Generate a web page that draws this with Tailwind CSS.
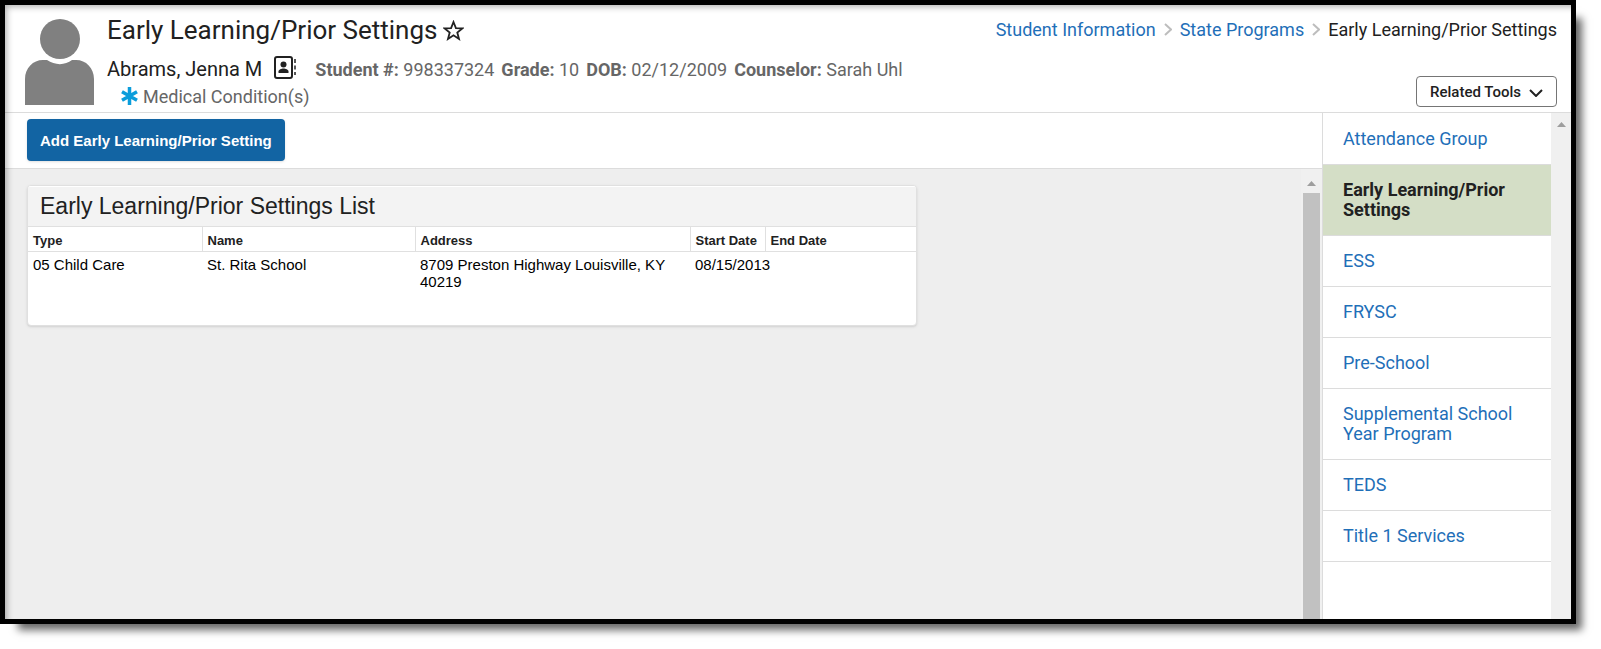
<!DOCTYPE html>
<html lang="en">

<head>
  <meta charset="UTF-8" />
  <meta name="viewport" content="width=device-width, initial-scale=1.0" />
  <title>Early Learning/Prior Settings</title>
  <script src="https://cdn.jsdelivr.net/npm/@tailwindcss/browser@4"></script>
</head>

<body class="h-screen bg-white pr-[25px] pb-[25px] font-[Roboto,sans-serif] text-[#212121]">
  <div class="relative flex flex-col h-full border-5 border-black bg-white shadow-[12px_12px_8px_-6px_rgba(0,0,0,0.6)]">
    <!-- header -->
    <header class="flex justify-between h-[108px] shrink-0 border-b border-[#dcdcdc] pl-5 pr-[14px]">
      <div class="flex">
        <svg class="w-[69px] h-[86px] mt-[14px] shrink-0" viewBox="0 0 69 86" fill="#808080" aria-hidden="true">
          <circle cx="35" cy="20" r="20" />
          <path d="M0 86V60C0 49 8 41 18 41H22C30 46.500 40 46.500 47 41H51C61 41 69 49 69 60V86Z" />
        </svg>
        <div class="pl-[13px] pt-2">
          <div class="flex items-center h-[34px]">
            <h1 class="text-[26px] leading-[34px]">Early Learning/Prior Settings</h1>
            <button type="button" class="ml-[6px]" aria-label="Add to favorites">
              <svg class="w-[21px] h-[21px]" viewBox="0 0 21 21" fill="none" stroke="#212121" stroke-width="1.800" stroke-linejoin="miter">
                <path d="M10.500 2L12.900 8.100L19.300 8.400L14.300 12.500L16 18.900L10.500 15.300L5 18.900L6.700 12.500L1.700 8.400L8.100 8.100Z" />
              </svg>
            </button>
          </div>
          <div class="flex items-center h-7 mt-2 whitespace-nowrap">
            <span class="text-[20px]">Abrams, Jenna M</span>
            <button type="button" class="ml-3" aria-label="Contact card">
              <svg class="w-[22px] h-[23px] mb-1" viewBox="0 0 22 23" fill="none">
                <rect x="1" y="1" width="17" height="21" rx="2" stroke="#212121" stroke-width="2" />
                <circle cx="9.500" cy="8.500" r="3" fill="#212121" />
                <path d="M4.500 17V15.500C4.500 13.500 7.500 12.500 9.500 12.500S14.500 13.500 14.500 15.500V17Z" fill="#212121" />
                <path d="M21 3V7M21 9.500V13.500M21 16V19" stroke="#212121" stroke-width="1.500" />
              </svg>
            </button>
            <div class="flex gap-[7px] ml-[19px] text-[18px] text-[#666666]">
              <span><b>Student #:</b> 998337324</span>
              <span><b>Grade:</b> 10</span>
              <span><b>DOB:</b> 02/12/2009</span>
              <span><b>Counselor:</b> Sarah Uhl</span>
            </div>
          </div>
          <div class="flex items-center h-[26px] pl-[14px] gap-[5px] text-[18px] text-[#666666]">
            <svg class="w-[17px] h-[18px]" viewBox="0 0 17 18" stroke="#0b9ddb" stroke-width="3.500" aria-hidden="true">
              <path d="M8.500 0V18M1 4.700L16 13.300M16 4.700L1 13.300" />
            </svg>
            <span>Medical Condition(s)</span>
          </div>
        </div>
      </div>

      <div class="flex flex-col items-end pt-3">
        <nav class="flex items-center gap-2 h-6 text-[18px] whitespace-nowrap" aria-label="Breadcrumb">
          <a href="#" class="text-[#1f6fb8]">Student Information</a>
          <svg class="w-[8px] h-[13px]" viewBox="0 0 8 13" fill="none" stroke="#bdbdbd" stroke-width="2"><path d="M1 1L7 6.500L1 12" /></svg>
          <a href="#" class="text-[#1f6fb8]">State Programs</a>
          <svg class="w-[8px] h-[13px]" viewBox="0 0 8 13" fill="none" stroke="#bdbdbd" stroke-width="2"><path d="M1 1L7 6.500L1 12" /></svg>
          <span>Early Learning/Prior Settings</span>
        </nav>
        <button type="button" class="flex items-center gap-2 h-[31px] mt-[35px] px-[13px] pt-[2px] border border-[#757575] rounded-[4px] text-[15px] font-medium">
          Related Tools
          <svg class="w-[14px] h-[8px]" viewBox="0 0 14 8" fill="none" stroke="#212121" stroke-width="2"><path d="M1 1L7 7L13 1" /></svg>
        </button>
      </div>
    </header>

    <div class="flex flex-1 min-h-0">
      <!-- main -->
      <main class="flex flex-col flex-1 min-w-0 font-['Liberation_Sans',Arial,sans-serif]">
        <div class="flex items-start h-[56px] shrink-0 pt-[6px] pl-[22px] border-b border-[#dcdcdc]">
          <button type="button" class="h-[42px] px-[13px] pt-[2px] rounded-[4px] bg-[#1264a3] text-white text-[15px] font-bold shadow-sm">Add Early Learning/Prior Setting</button>
        </div>
        <div class="flex flex-1 min-h-0 bg-[#eeeeee]">
          <div class="flex-1 pt-4 pl-[22px]">
            <section class="w-[890px] h-[141px] border border-[#e0e0e0] rounded-[4px] bg-white overflow-hidden shadow-sm">
              <h2 class="h-[41px] pl-3 border-t border-b border-t-white border-b-[#e0e0e0] bg-[#f3f3f3] text-[23px] leading-[38px]">Early Learning/Prior Settings List</h2>
              <table class="w-full table-fixed text-left">
                <thead>
                  <tr class="h-[24px] text-[13px] leading-[17px] border-b border-[#e0e0e0]">
                    <th class="w-[174px] pt-[3px] pl-[5px] border-r border-[#e0e0e0]">Type</th>
                    <th class="w-[213px] pt-[3px] pl-[5px] border-r border-[#e0e0e0]">Name</th>
                    <th class="w-[275px] pt-[3px] pl-[5px] border-r border-[#e0e0e0]">Address</th>
                    <th class="w-[75px] pt-[3px] pl-[5px] border-r border-[#e0e0e0] whitespace-nowrap">Start Date</th>
                    <th class="pt-[3px] pl-[5px]">End Date</th>
                  </tr>
                </thead>
                <tbody>
                  <tr class="text-[15px] leading-[17px] text-black align-top">
                    <td class="pt-1 pl-[5px]">05 Child Care</td>
                    <td class="pt-1 pl-[5px]">St. Rita School</td>
                    <td class="pt-1 px-[5px]">8709 Preston Highway Louisville, KY 40219</td>
                    <td class="pt-1 pl-[5px] whitespace-nowrap">08/15/2013</td>
                    <td></td>
                  </tr>
                </tbody>
              </table>
            </section>
          </div>
          <!-- scrollbar -->
          <div class="flex flex-col items-center w-[21px] pt-3 bg-[#f0f0f0]">
            <svg class="w-[9px] h-[5px] shrink-0" viewBox="0 0 9 5" fill="#9e9e9e"><path d="M0 5L4.500 0L9 5Z" /></svg>
            <div class="flex-1 w-[17px] mt-[7px] bg-[#c1c1c1]"></div>
          </div>
        </div>
      </main>

      <!-- related tools -->
      <aside class="flex w-[249px] shrink-0 border-l border-[#dcdcdc]">
        <nav class="flex-1 pt-px text-[18px] leading-[20px] text-[#1f6fb8]">
          <a href="#" class="block px-5 py-[15px] border-b border-[#dcdcdc]">Attendance Group</a>
          <a href="#" class="block px-5 py-[15px] border-b border-[#dcdcdc] bg-[#d4dec6] font-bold text-[#212121]">Early Learning/Prior Settings</a>
          <a href="#" class="block px-5 py-[15px] border-b border-[#dcdcdc]">ESS</a>
          <a href="#" class="block px-5 py-[15px] border-b border-[#dcdcdc]">FRYSC</a>
          <a href="#" class="block px-5 py-[15px] border-b border-[#dcdcdc]">Pre-School</a>
          <a href="#" class="block px-5 py-[15px] border-b border-[#dcdcdc]">Supplemental School Year Program</a>
          <a href="#" class="block px-5 py-[15px] border-b border-[#dcdcdc]">TEDS</a>
          <a href="#" class="block px-5 py-[15px] border-b border-[#dcdcdc]">Title 1 Services</a>
        </nav>
        <div class="flex justify-center w-[20px] pt-[9px] bg-[#f0f0f0]">
          <svg class="w-[9px] h-[5px]" viewBox="0 0 9 5" fill="#9e9e9e"><path d="M0 5L4.500 0L9 5Z" /></svg>
        </div>
      </aside>
    </div>

    <!-- inner frame shadow -->
    <div class="absolute inset-0 pointer-events-none shadow-[inset_4px_4px_6px_-2px_rgba(0,0,0,0.3)]"></div>
  </div>
</body>

</html>
